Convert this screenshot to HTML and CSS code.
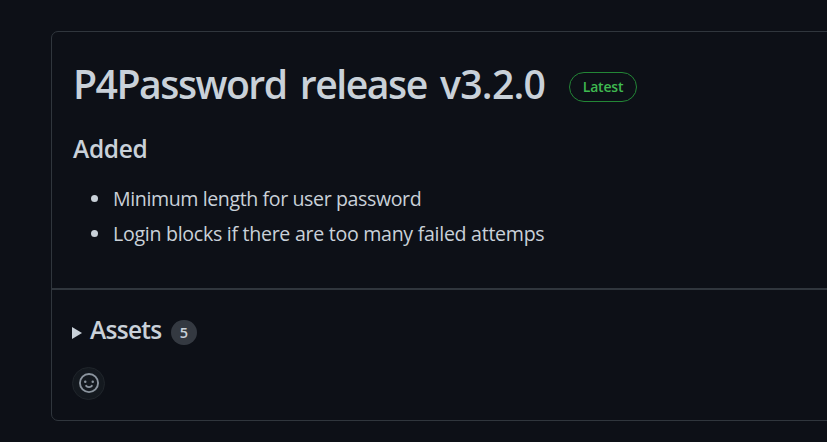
FILE: index.html
```html
<!DOCTYPE html>
<html lang="en">
<head>
<meta charset="utf-8">
<title>P4Password release v3.2.0</title>
<link rel="stylesheet" href="styles.css">
</head>
<body>
<main class="release">
  <section class="release-body">
    <header class="release-header">
      <h1 class="release-title">P4Password release <span class="version">v3.2.0</span></h1>
      <span class="label-latest">Latest</span>
    </header>
    <h3 class="section-title">Added</h3>
    <ul class="changes">
      <li><span class="change-a">Minimum length for user password</span></li>
      <li><span class="change-b">Login blocks if there are too many failed attemps</span></li>
    </ul>
  </section>
  <footer class="release-footer">
    <div class="assets">
      <svg class="caret" viewBox="0 0 10 12"><path d="M0 0L10 6L0 12Z"/></svg>
      <span class="assets-title">Assets</span>
      <span class="counter">5</span>
    </div>
    <button class="reaction" aria-label="Add reaction">
      <svg class="smiley" viewBox="0 0 16 16"><path d="M8 0a8 8 0 1 1 0 16A8 8 0 0 1 8 0ZM1.5 8a6.5 6.5 0 1 0 13 0 6.5 6.5 0 0 0-13 0Zm3.82 1.636a.75.75 0 0 1 1.038.175l.007.009c.103.118.22.222.35.31.264.178.683.37 1.285.37.602 0 1.02-.192 1.285-.371.13-.088.247-.192.35-.31l.007-.008a.75.75 0 0 1 1.222.87l-.022-.015c.02.013.021.015.021.015v.001l-.001.002-.002.003-.005.007-.014.019a2.066 2.066 0 0 1-.184.213c-.16.166-.338.316-.53.445-.63.418-1.37.638-2.127.629-.946 0-1.652-.308-2.126-.63a3.331 3.331 0 0 1-.715-.657l-.014-.02-.005-.006-.002-.003v-.002h-.001l.613-.432-.614.43a.75.75 0 0 1 .183-1.044ZM12 7a1 1 0 1 1-2 0 1 1 0 0 1 2 0ZM5 8a1 1 0 1 1 0-2 1 1 0 0 1 0 2Z"/></svg>
    </button>
  </footer>
</main>
</body>
</html>
```
FILE: styles.css
```css
* { box-sizing: border-box; }
body {
  margin: 0;
  height: 442px;
  overflow: hidden;
  background: #0d1017;
  color: #c9d1d9;
  font-family: "Open Sans", "Noto Sans", sans-serif;
}
.release {
  margin: 31px -10px 0 51px;
  height: 390px;
  border: 1px solid #30363d;
  border-radius: 7px;
}
.release-body {
  height: 258px;
  padding: 24px 20px 0;
  border-bottom: 2px solid #30363d;
}
.release-header { display: flex; align-items: center; height: 56px; }
.release-title {
  width: 497px;
  margin: 0;
  padding-left: 1px;
  font-size: 39.2px;
  font-weight: 600;
  line-height: 56px;
  letter-spacing: -1.5px;
  word-spacing: 4.5px;
  white-space: nowrap;
}
.version { letter-spacing: -0.7px; }
.label-latest {
  width: 68px;
  height: 30px;
  margin-top: 6px;
  border: 1px solid #238636;
  border-radius: 15px;
  color: #3fb950;
  font-size: 14px;
  font-weight: 600;
  line-height: 28px;
  text-align: center;
  letter-spacing: -0.2px;
}
.section-title {
  margin: 19px 0 0;
  padding-left: 1px;
  font-size: 24.5px;
  font-weight: 600;
  line-height: 36px;
  letter-spacing: -0.3px;
}
.changes { margin: 14px 0 0; padding-left: 40px; font-size: 19.6px; }
.changes li { height: 35px; padding-left: 1px; line-height: 35px; white-space: nowrap; }
.change-a { letter-spacing: -0.4px; }
.change-b { letter-spacing: -0.29px; }
.release-footer { padding: 22px 20px 0; }
.assets { display: flex; align-items: center; height: 36px; }
.caret { width: 10px; height: 12px; margin: 5px 8px 0 0; fill: #c9d1d9; }
.assets-title {
  width: 81px;
  font-size: 24.5px;
  font-weight: 600;
  line-height: 36px;
  letter-spacing: -0.7px;
}
.counter {
  width: 26px;
  height: 25px;
  margin-top: 5px;
  border-radius: 13px;
  background: #343941;
  font-size: 14.5px;
  font-weight: 600;
  line-height: 26px;
  text-align: center;
}
.reaction {
  display: flex;
  align-items: center;
  justify-content: center;
  width: 33px;
  height: 33px;
  margin: 19px 0 0;
  padding: 0 0 1px;
  border: 1px solid #20252b;
  border-radius: 50%;
  background: #14191f;
}
.smiley { width: 20px; height: 20px; fill: #8b949e; }
```
